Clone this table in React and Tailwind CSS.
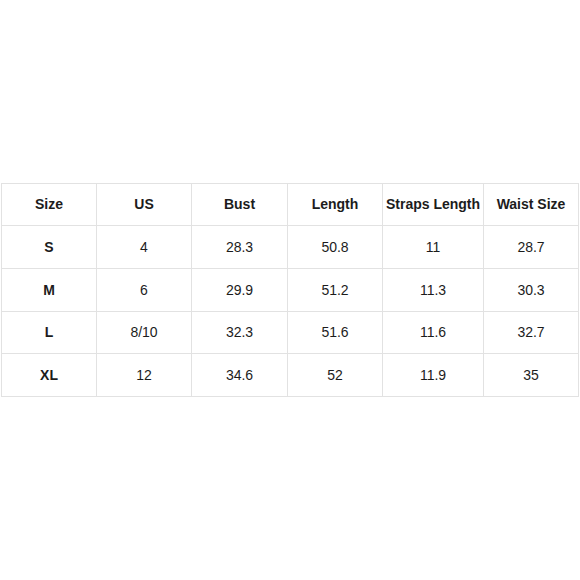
const headers = ["Size", "US", "Bust", "Length", "Straps Length", "Waist Size"];

const rows = [
  ["S", "4", "28.3", "50.8", "11", "28.7"],
  ["M", "6", "29.9", "51.2", "11.3", "30.3"],
  ["L", "8/10", "32.3", "51.6", "11.6", "32.7"],
  ["XL", "12", "34.6", "52", "11.9", "35"],
];

const rowHeights = ["h-[43px]", "h-[43px]", "h-[42px]", "h-[43px]"];

const SizeChart = () => {
  return (
    <div className="w-[580px] h-[580px] bg-white flex items-center font-['Liberation_Sans',Arial,sans-serif] text-[#1c1c1c]">
      <div className="ml-px w-[578px] border-r border-b border-[#e2e2e2] grid grid-cols-[95px_95px_96px_95px_101px_95px]">
        {headers.map((h) => (
          <div
            key={h}
            className="h-[42px] border-l border-t border-[#e2e2e2] flex items-center justify-center text-[14px] font-bold"
          >
            {h}
          </div>
        ))}
        {rows.map((row, i) =>
          row.map((cell, j) => (
            <div
              key={`${i}-${j}`}
              className={`${rowHeights[i]} border-l border-t border-[#e2e2e2] flex items-center justify-center text-[14px] ${
                j === 0 ? "font-bold" : ""
              }`}
            >
              {cell}
            </div>
          ))
        )}
      </div>
    </div>
  );
};

export default SizeChart;
